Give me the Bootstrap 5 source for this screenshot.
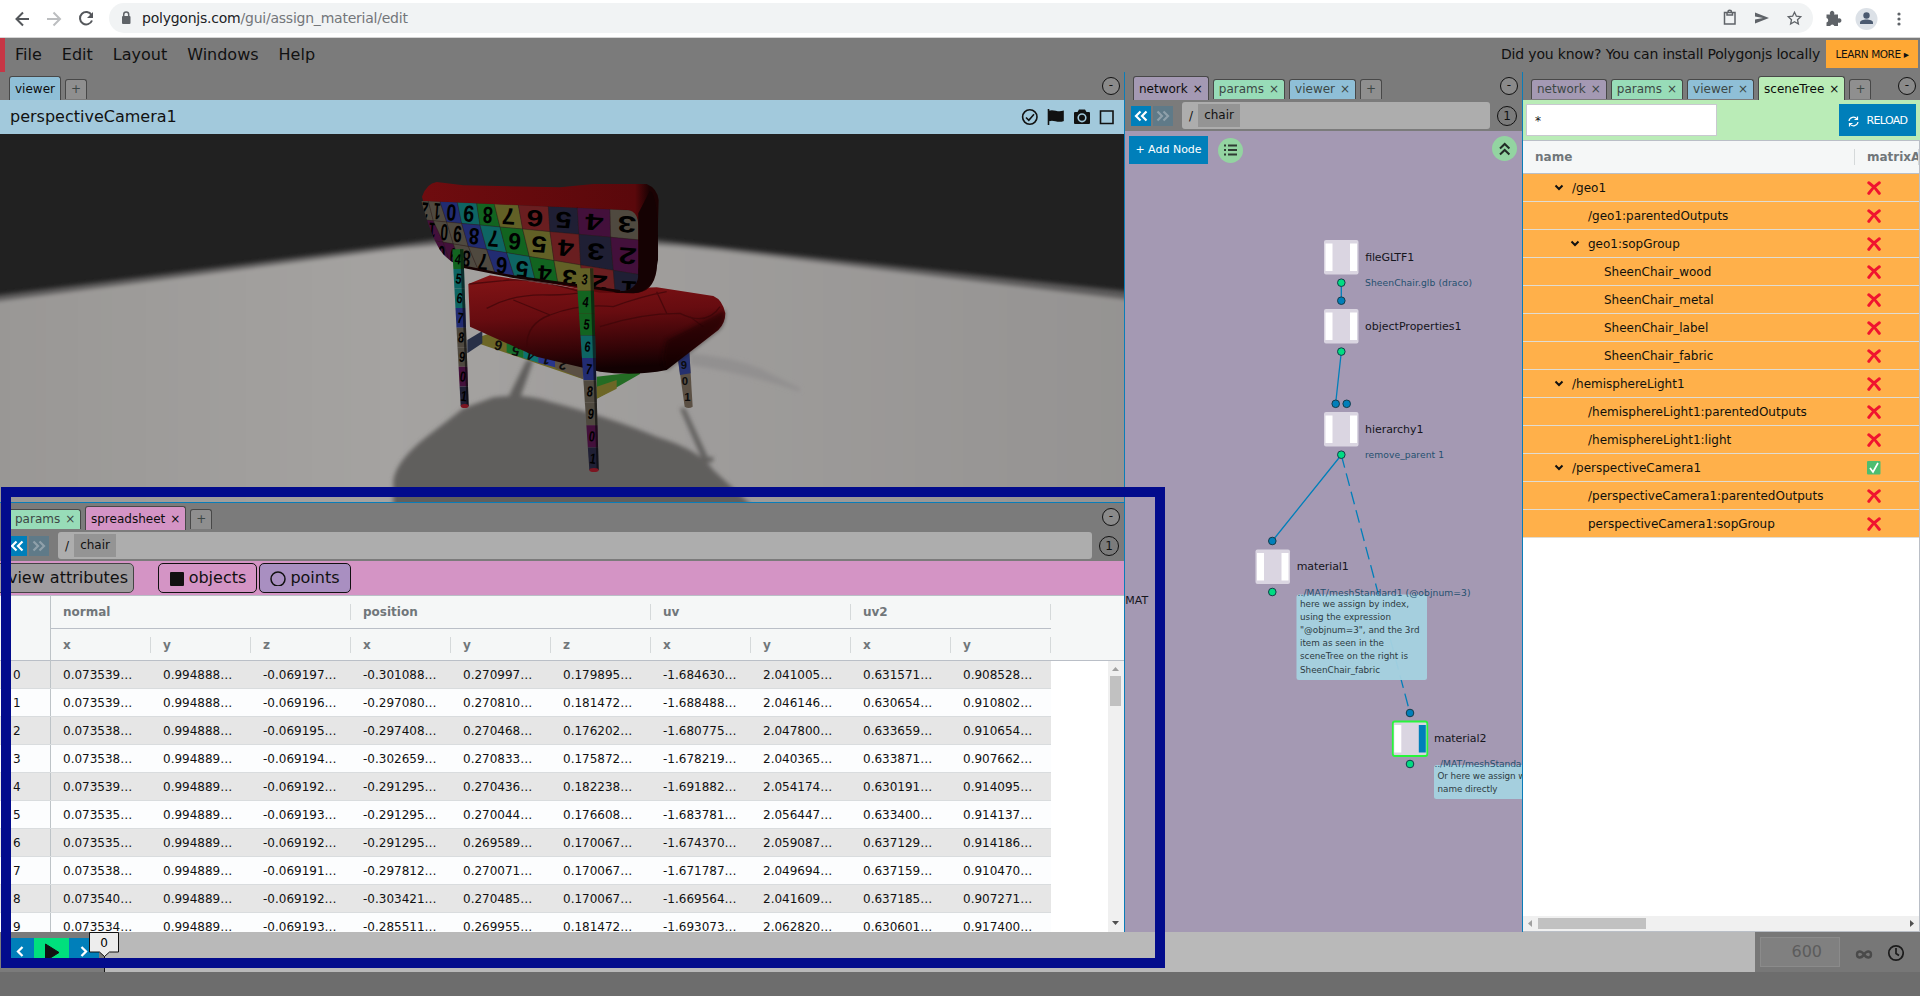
<!DOCTYPE html>
<html lang="en">
<head>
<meta charset="utf-8">
<title>Polygonjs - assign_material</title>
<meta name="viewport" content="width=device-width, initial-scale=1">
<link href="https://cdn.jsdelivr.net/npm/bootstrap@5.3.0/dist/css/bootstrap.min.css" rel="stylesheet">
<style>
body{width:1920px;height:996px;overflow:hidden;background:#7b7b7b;font:12px/16px "DejaVu Sans",sans-serif;color:#111}
svg{display:block;flex:none}
.chrome-bar{height:38px;background:#fff;border-bottom:1px solid #d5d5d5;padding-left:14px}
.omni{height:30px;width:1704px;margin-left:13px;background:#f1f3f4;border-radius:15px;padding:0 10px 0 10px;font-size:14px;color:#202124;margin-top:-1px}
.omni .path{color:#73767a}
.url-text{letter-spacing:-.23px}
.menu-row{height:34px;border-left:5px solid #c73645}
.menu-row .entries{font-size:16px;gap:20px;padding-left:10px}
.tip{font-size:14px;letter-spacing:-.17px;padding-bottom:3px}
.learn{width:92px;height:28px;background:#ffa834;font-size:10.5px;letter-spacing:-.42px;margin:0 2px 2px 6px;padding-bottom:1px}
.panel-a{width:1125px;border-right:1px solid #0a7db8}
.panel-b{width:398px;border-right:1px solid #0a7db8}
.panel-c{width:397px}
.tabrow{height:28px;padding-left:9px;gap:4px}
.tb{height:20px;margin-bottom:1px;border:1px solid #484848;border-bottom:0;border-radius:3px 3px 0 0;padding:0 5px;color:#3c4745;line-height:18px;white-space:nowrap}
.tb.on{height:24px;margin-bottom:0;line-height:24px;color:#0c0c0c}
.tb i{font-style:normal;margin-left:5px}
.purple{background:#a499b3}.green{background:#98dcb8}.blue{background:#8fbfd7}.pink{background:#d494c5}.lime{background:#baecb7}.plain{background:#8f8f8f;width:22px;text-align:center}
.circ{width:18px;height:18px;border:1px solid #111;border-radius:50%;line-height:14px;text-align:center;background:#8a8a8a;font-size:12px}
.circ.one{width:20px;height:20px;line-height:18px;background:transparent;font-size:12px}
.nav-sq{width:20px;height:20px;background:#007fba}
.nav-sq.off{background:#5f7a88;margin-left:2px}
.pathbox{height:27px;background:#adadad;border-radius:3px;padding-left:7px}
.pathbox b{font-weight:400;background:#949494;height:23px;line-height:22px;width:42px;text-align:center;margin-left:5px}
.cam-head{height:34px;background:#a2c9dc;font-size:16px;padding:0 10px}
.blueline{height:1px;background:#0a7db8}
.sheet-bar{height:34px;background:#d494c5;font-size:16px}
.sheet-bar .bx{height:30px;border:1px solid #111;border-radius:5px}
.sheet{background:#fff;height:337px;overflow:hidden;border-top:1px solid #babfc7}
.hd{background:#f5f7f7;color:#70767a;font-weight:700}
.hd .cl{position:relative;height:32px;line-height:33px;padding-left:13px}
.hd .cl::after{content:"";position:absolute;right:0;top:8px;height:16px;width:1px;background:#d5d9da}
.hd .cl.first{padding:0;border-right:1px solid #bdc3c7}.hd .cl.first::after{display:none}
.first{width:51px;flex:none}
.dr{height:28px;border-bottom:1px solid #d9dcde;background:#fcfdfe;width:1051px;line-height:28px}
.dr.odd{background:#e6e6e6}
.dr div{width:100px;padding-left:12px}
.dr div.first{width:51px;padding-left:13px;border-right:1px solid #bdc3c7}
.vscroll{width:16px;background:#f0f0f0}
.addnode{width:79px;height:28px;background:#007fba;color:#fff;font-size:11px;padding-bottom:1px}
.rd{width:25px;height:25px;border-radius:50%;background:#93d4a1}
.tree{height:792px;background:#fff;border-top:1px solid #babfc7;border-right:1px solid #babfc7;border-bottom:1px solid #babfc7;overflow:hidden}
.trow{height:28px;background:#ffb04a;border-bottom:1px solid #e0dcd2;line-height:28px;color:#10100c}
.trow svg{position:relative;top:.5px}
.timeline{height:40px;background:#b9b9b9;position:relative}
.annot{position:absolute;left:1px;top:487px;width:1164px;height:481px;border:10px solid #020b8c;z-index:20}
.tick{position:absolute;left:89px;top:0;z-index:10}
.pbtn{width:30px;height:30px;background:#007fba}
</style>
</head>
<body>
<header class="chrome-bar d-flex align-items-center">
  <svg width="82" height="36" viewBox="0 0 82 36" fill="none" stroke="#54575b" stroke-width="2"><path d="M15 18H3M9 11.500L2.500 18L9 24.500"/><path d="M33 18h12M39.500 11.500L46 18l-6.500 6.500" stroke="#bcbec0"/><path d="M77.500 14A6.200 6.200 0 1 0 78 19.500"/><path d="M79 11v6h-6z" fill="#54575b" stroke="none"/></svg>
  <div class="omni d-flex align-items-center">
    <svg class="me-2" width="15" height="16" viewBox="0 0 15 16"><rect x="3" y="6" width="8.500" height="8" rx="1" fill="#5f6368"/><path d="M4.700 6V4.500a2.500 2.500 0 0 1 5 0V6" fill="none" stroke="#5f6368" stroke-width="1.500"/></svg>
    <span class="url-text">polygonjs.com<span class="path">/gui/assign_material/edit</span></span>
    <svg class="ms-auto" width="80" height="20" viewBox="0 0 80 20" fill="none" stroke="#5f6368" stroke-width="1.500"><path d="M1.500 4.500h10.500v11.500H1.500zM4 4.500V7h5.500V4.500M5 4a1.700 1.700 0 0 1 3.500 0"/><path d="M32 4.500l14 5.500-14 5.500V11.500l8-1.500-8-1.500z" fill="#5f6368" stroke="none"/><path d="M71.500 4.200l1.900 4 4.300.500-3.200 3 .900 4.300-3.900-2.200-3.900 2.200.900-4.300-3.200-3 4.300-.500z" stroke-width="1.300"/></svg>
  </div>
  <svg width="88" height="36" viewBox="1 0 88 36" fill="#5f6368"><path d="M5.500 13.500h3.700a2.300 2.300 0 1 1 3.800 0h4v4a2.300 2.300 0 1 1 0 4v3.500h-3.600a2.200 2.200 0 0 0-4.200 0H5.500v-3.600a2.200 2.200 0 0 0 0-4.300z" transform="translate(9 0)"/><circle cx="54.500" cy="18" r="11" fill="#dce1e7"/><g fill="#4b5a70"><circle cx="54.500" cy="14.500" r="3.200"/><path d="M48 23v-1.500c0-4 13-4 13 0V23z"/></g><circle cx="87" cy="13" r="1.600"/><circle cx="87" cy="18" r="1.600"/><circle cx="87" cy="23" r="1.600"/></svg>
</header>
<nav class="menu-row d-flex align-items-center">
  <div class="entries d-flex"><span>File</span><span>Edit</span><span>Layout</span><span>Windows</span><span>Help</span></div>
  <span class="tip ms-auto">Did you know? You can install Polygonjs locally</span>
  <div class="learn d-flex align-items-center justify-content-center">LEARN MORE ▸</div>
</nav>
<main class="d-flex" style="height:860px">
  <section class="panel-a d-flex flex-column overflow-hidden">
    <div class="tabrow d-flex align-items-end"><div class="tb on blue">viewer</div><div class="tb plain">+</div><div class="circ ms-auto align-self-center" style="margin-right:4px">-</div></div>
    <div class="cam-head d-flex align-items-center"><span>perspectiveCamera1</span>
      <svg class="ms-auto" width="94" height="20" viewBox="0 0 94 20" fill="none" stroke="#111" stroke-width="1.600"><circle cx="9.800" cy="10" r="7.200"/><path d="M6 10.500l2.800 2.800 5.200-6"/><path d="M28.500 2v16M29 4.500c5-2 8 2 14 0v9c-6 2-9-2-14 0z" fill="#111"/><path d="M54 5h3.500l1.500-2.500h6L66.500 5H69q1 0 1 1v10q0 1-1 1H55q-1 0-1-1V6q0-1 1-1z" fill="#111" stroke="none"/><circle cx="62" cy="10.800" r="3.800" stroke="#a2c9dc"/><path d="M80.500 4h12.500v12.500H80.500z"/></svg>
    </div>
    <svg id="view" width="1124" height="368" viewBox="0 134 1124 368">
      <defs>
        <linearGradient id="fl" x1="0" y1="0" x2="1" y2="0"><stop offset="0" stop-color="#999795"/><stop offset=".35" stop-color="#a5a3a1"/><stop offset="1" stop-color="#959392"/></linearGradient>
        <linearGradient id="seat" x1="0" y1="0" x2=".15" y2="1"><stop offset="0" stop-color="#841416"/><stop offset=".45" stop-color="#670c10"/><stop offset=".8" stop-color="#340407"/><stop offset="1" stop-color="#120102"/></linearGradient>
        <linearGradient id="backr" x1="0" y1="0" x2="1" y2="0"><stop offset="0" stop-color="#6f0c0f"/><stop offset=".9" stop-color="#5a080b"/><stop offset=".96" stop-color="#1b0203"/></linearGradient>
        <filter id="b1"><feGaussianBlur stdDeviation="2"/></filter><filter id="b2"><feGaussianBlur stdDeviation="6"/></filter>
        <clipPath id="bc"><path d="M124 122L745 150Q775 155 775 200V350Q768 392 720 394Q400 350 240 318Q200 300 180 270Q150 220 124 122z"/></clipPath>
      </defs>
      <rect y="134" width="1124" height="368" fill="#212121"/>
      <path d="M-10 296L470 235Q560 228 640 238L1134 292V520H-10z" fill="#5b5a5a" filter="url(#b1)"/>
      <path d="M-10 302L400 248Q560 232 720 250L1134 300V520H-10z" fill="url(#fl)" filter="url(#b1)"/>
      <g transform="translate(380 160) scale(.33333)">
        <g filter="url(#b2)" fill="#615f5d"><path d="M930 580Q1050 590 1140 625L1260 685V695Q1100 640 930 615z" fill="#929090"/><path d="M40 960Q50 900 140 830Q200 785 250 745L340 712Q440 700 510 725Q700 775 830 830Q960 870 1000 930L1130 1050H40z"/><path d="M285 740L420 715L460 600L440 600L385 712zM915 745L990 905L970 905L900 745zM650 930L1000 890V905L650 942z"/></g>
        <path d="M300 530L330 520L610 605V658L300 552z" fill="#6d6626"/><path d="M380 545l50 13v36l-50-17z" fill="#176d2c"/><path d="M430 558l45 12v38l-45-14z" fill="#0d7271"/><path d="M475 570l50 14v38l-50-14z" fill="#29358b"/><path d="M525 584l85 21v52l-85-33z" fill="#5b5044"/>
        <g font-family="Liberation Sans" font-weight="700" font-size="42" fill="#0c0c0c"><text transform="translate(370 545) rotate(195)">6</text><text transform="translate(422 562) rotate(195)">5</text><text transform="translate(468 575) rotate(195)">4</text><text transform="translate(514 588) rotate(195)">1</text><text transform="translate(564 604) rotate(195)">2</text></g>
        <path d="M262 540l45-27v37l-45 30z" fill="#283047"/><path d="M650 650L780 635V642L650 716z" fill="#246c24"/><path d="M650 680l60-20v26l-60 30z" fill="#6d6626"/>
        <path d="M893 590l35-15 10 165q-12 8-24 0z" fill="#5b5044"/><path d="M893 590l35-15 4 65-32 5z" fill="#26316f"/>
        <g font-family="Liberation Sans" font-weight="700" font-size="34" fill="#0c0c0c"><text x="902" y="628">9</text><text x="905" y="676">0</text><text x="913" y="722">1</text></g>
        <path d="M265 372L330 346L620 390L830 382L1000 408Q1028 420 1036 460Q1036 490 1015 510L860 630Q760 650 660 635L470 590L270 500z" fill="url(#seat)"/>
        <path d="M268 372L370 362Q450 350 600 395M320 445Q400 400 510 405Q570 405 620 395M440 560Q440 490 510 465Q600 430 700 440Q780 410 860 395M510 465L400 420M660 500Q780 460 900 460Q980 500 1020 440M860 460L830 395M930 470L970 500" fill="none" stroke="#3c0508" stroke-width="4" opacity=".7"/>
        <path d="M1034 470Q1030 500 1015 510L860 630Q840 600 860 540Q940 500 1034 450z" fill="#120102" opacity=".55" filter="url(#b2)"/>
        <path d="M126 110Q140 70 170 66L250 76L540 82L640 72L800 72Q832 85 836 120L830 330Q820 400 760 400L660 398L240 320Q180 290 150 200z" fill="url(#backr)"/>
        <path d="M810 92Q836 100 834 300Q820 400 760 400L700 398Q772 390 775 320V160z" fill="#150203"/>
        <g clip-path="url(#bc)" id="cells"></g>
        <path d="M240 318L400 350L720 394" stroke="#160202" stroke-width="8" fill="none"/>
        <g id="legs"></g>
      </g>
    </svg>
    <div class="blueline"></div>
    <div class="tabrow d-flex align-items-end" style="padding-left:4px;height:27px"><div class="tb green" style="width:77px;padding-left:10px">params<i>×</i></div><div class="tb on pink">spreadsheet<i>×</i></div><div class="tb plain">+</div><div class="circ ms-auto align-self-center" style="margin-right:4px">-</div></div>
    <div class="d-flex align-items-center" style="height:31px;padding-left:7px;padding-right:5px"><div class="nav-sq"><svg width="20" height="20" fill="none" stroke="#fff" stroke-width="2.200"><path d="M9.500 5.500L5 10l4.500 4.500M15.500 5.500L11 10l4.500 4.500"/></svg></div><div class="nav-sq off"><svg width="20" height="20" fill="none" stroke="#8fa0aa" stroke-width="2.200"><path d="M4.500 5.500L9 10l-4.500 4.500M10.500 5.500L15 10l-4.500 4.500"/></svg></div><div class="pathbox d-flex align-items-center" style="width:1034px;margin-left:9px"><span>/</span><b>chair</b></div><div class="circ one ms-auto">1</div></div>
    <div class="sheet-bar d-flex align-items-center"><div class="bx d-flex align-items-center justify-content-end" style="width:139px;margin-left:-5px;padding-right:5px;background:#9f9c9f;border-color:#444">view attributes</div>
      <div class="bx d-flex align-items-center justify-content-center" style="width:99px;margin-left:24px"><svg class="me-1" width="16" height="16"><rect x="1" y="2" width="14" height="14" rx="1" fill="#111"/></svg><span>objects</span></div>
      <div class="bx d-flex align-items-center justify-content-center" style="width:92px;margin-left:2px;background:#a98fc1"><svg class="me-1" width="16" height="16"><circle cx="8" cy="9" r="7" fill="none" stroke="#111" stroke-width="1.500"/></svg><span>points</span></div>
    </div>
    <div class="sheet">
      <div class="hd d-flex" style="height:33px"><div class="cl first" style="height:33px"></div><div class="d-flex" style="border-bottom:1px solid #babfc7"><div class="cl" style="width:300px;padding-left:12px">normal</div><div class="cl" style="width:300px;padding-left:12px">position</div><div class="cl" style="width:200px;padding-left:12px">uv</div><div class="cl" style="width:200px;padding-left:12px">uv2</div></div></div>
      <div class="hd d-flex" id="axes" style="border-bottom:1px solid #babfc7;height:32px"><div class="cl first" style="height:32px"></div></div>
      <div class="d-flex justify-content-between"><div id="rows" style="width:1051px"></div><div class="vscroll"><svg width="16" height="271"><path d="M4 10h7l-3.500-4z" fill="#a0a0a0"/><rect x="2" y="15" width="11" height="30" fill="#c1c1c1"/><path d="M4 260h7l-3.500 4z" fill="#505050"/></svg></div></div>
    </div>
  </section>
  <section class="panel-b d-flex flex-column overflow-hidden">
    <div class="tabrow d-flex align-items-end" style="padding-left:8px"><div class="tb on purple">network<i>×</i></div><div class="tb green">params<i>×</i></div><div class="tb blue">viewer<i>×</i></div><div class="tb plain">+</div><div class="circ ms-auto align-self-center" style="margin-right:4px">-</div></div>
    <div class="d-flex align-items-center" style="height:31px;padding-left:6px;padding-right:5px"><div class="nav-sq"><svg width="20" height="20" fill="none" stroke="#fff" stroke-width="2.200"><path d="M9.500 5.500L5 10l4.500 4.500M15.500 5.500L11 10l4.500 4.500"/></svg></div><div class="nav-sq off"><svg width="20" height="20" fill="none" stroke="#8fa0aa" stroke-width="2.200"><path d="M4.500 5.500L9 10l-4.500 4.500M10.500 5.500L15 10l-4.500 4.500"/></svg></div><div class="pathbox d-flex align-items-center" style="width:308px;margin-left:9px"><span>/</span><b>chair</b></div><div class="circ one ms-auto">1</div></div>
    <div class="purple position-relative" style="height:801px">
      <svg id="graph" class="position-absolute top-0 start-0" width="397" height="800" viewBox="1125 131 397 800" style="font-family:'DejaVu Sans',sans-serif"></svg>
      <div class="position-relative d-flex align-items-start" style="padding:5px 5px 0 4px"><div class="addnode d-flex align-items-center justify-content-center">+ Add Node</div>
      <div class="rd" style="margin:2px 0 0 10px"><svg width="25" height="25" fill="none" stroke="#2f3a33" stroke-width="1.800"><path d="M6 7.500h2M6 12h2M6 16.500h2M10 7.500h9M10 12h9M10 16.500h9"/></svg></div>
      <div class="rd ms-auto"><svg width="25" height="25" fill="none" stroke="#222c26" stroke-width="2"><path d="M8 12.500L12.700 8l4.700 4.500M8 18.500l4.700-4.500 4.700 4.500"/></svg></div></div>
    </div>
  </section>
  <section class="panel-c d-flex flex-column overflow-hidden">
    <div class="tabrow d-flex align-items-end" style="padding-left:8px"><div class="tb purple">network<i>×</i></div><div class="tb green">params<i>×</i></div><div class="tb blue">viewer<i>×</i></div><div class="tb on lime">sceneTree<i>×</i></div><div class="tb plain">+</div><div class="circ ms-auto align-self-center" style="margin-right:4px">-</div></div>
    <div class="lime d-flex justify-content-between" style="height:40px;padding:4px 4px 4px 3px"><div class="bg-white" style="width:191px;height:32px;border:1px solid #c9c9d0;padding:8px 8px">*</div><div class="d-flex align-items-center justify-content-center text-white" style="width:77px;background:#007fba;height:32px;font-size:11px;letter-spacing:-.65px;padding-top:2px"><svg class="me-2" width="11" height="11" viewBox="0 0 11 11" fill="none" stroke="#fff" stroke-width="1.200"><path d="M1 5A4.500 4.500 0 0 1 9 3M10 6A4.500 4.500 0 0 1 2 8M9.500.500V3.500H6.500M1.500 10.500V7.500h3"/></svg>RELOAD</div></div>
    <div class="tree d-flex flex-column"><div class="hd d-flex" style="height:33px;flex:none;border-bottom:1px solid #babfc7"><div class="cl" style="width:332px;padding-left:12px">name</div><div class="cl text-nowrap overflow-hidden" style="width:64px;padding-left:12px">matrixA</div></div><div id="tree"></div>
      <svg class="mt-auto" width="396" height="15"><rect width="396" height="15" fill="#f0f0f0"/><path d="M9 4v7l-4-3.500z" fill="#a0a0a0"/><rect x="15" y="2" width="108" height="11" fill="#c1c1c1"/><path d="M387 4v7l4-3.500z" fill="#505050"/></svg></div>
  </section>
</main>
<footer>
  <div class="timeline d-flex">
    <div class="d-flex" style="width:104px;background:#7b7b7b;padding:6px 0 0 4px"><div class="pbtn"><svg width="30" height="30" fill="none" stroke="#fff" stroke-width="2.300"><path d="M18.500 9L14 13.500l4.500 4.500"/></svg></div><div class="pbtn" style="width:35px;background:#00e07d"><svg width="35" height="30"><path d="M11.500 6v17L25 14.500z" fill="#111" stroke="#111" stroke-linejoin="round"/></svg></div><div class="pbtn"><svg width="30" height="30" fill="none" stroke="#fff" stroke-width="2.300"><path d="M12.500 9L17 13.500 12.500 18"/></svg></div></div>
    <svg class="tick" width="31" height="40"><path d="M15.500 24v17" stroke="#111"/><path d="M.500 .500h29v19.500h-9l-5 4.500-5-4.500h-10z" fill="#ededed" stroke="#111"/><text x="15" y="14.500" font-size="12" text-anchor="middle" font-family="DejaVu Sans">0</text></svg>
    <div class="ms-auto d-flex align-items-center" style="width:165px;background:#777;padding-left:5px;color:#5c5c5c"><div class="text-end" style="width:80px;height:30px;border:1px solid #8b8b8b;background:#808080;padding:6px 17px;font-size:16px">600</div><svg width="64" height="36" fill="none" stroke="#4a4a4a" stroke-width="2.400"><path d="M24 20.500c-3-4.500-7-3.500-7 0s4 4.500 7 0 7-3.500 7 0-4 4.500-7 0z"/><g stroke="#1b1b1b" stroke-width="1.700"><circle cx="56" cy="19" r="7.200"/><path d="M56 14V19.500l3 2"/></g></svg></div>
  </div>
  <div style="height:24px;background:#6d6d6d"></div>
</footer>
<div class="annot"></div>
<script>
const E = id => document.getElementById(id);
E('axes').insertAdjacentHTML('beforeend', ['x','y','z','x','y','z','x','y','x','y'].map(t => `<div class="cl" style="width:100px;padding-left:12px">${t}</div>`).join(''));
const data = `0.073539 0.994888 -0.069197 -0.301088 0.270997 0.179895 -1.684630 2.041005 0.631571 0.908528
0.073539 0.994888 -0.069196 -0.297080 0.270810 0.181472 -1.688488 2.046146 0.630654 0.910802
0.073538 0.994888 -0.069195 -0.297408 0.270468 0.176202 -1.680775 2.047800 0.633659 0.910654
0.073538 0.994889 -0.069194 -0.302659 0.270833 0.175872 -1.678219 2.040365 0.633871 0.907662
0.073539 0.994889 -0.069192 -0.291295 0.270436 0.182238 -1.691882 2.054174 0.630191 0.914095
0.073535 0.994889 -0.069193 -0.291295 0.270044 0.176608 -1.683781 2.056447 0.633400 0.914137
0.073535 0.994889 -0.069192 -0.291295 0.269589 0.170067 -1.674370 2.059087 0.637129 0.914186
0.073538 0.994889 -0.069191 -0.297812 0.270071 0.170067 -1.671787 2.049694 0.637159 0.910470
0.073540 0.994889 -0.069192 -0.303421 0.270485 0.170067 -1.669564 2.041609 0.637185 0.907271
0.073534 0.994889 -0.069193 -0.285511 0.269955 0.181472 -1.693073 2.062820 0.630601 0.917400`.split('\n');
E('rows').innerHTML = data.map((r, i) => `<div class="dr d-flex ${i % 2 ? '' : 'odd'}"><div class="first">${i}</div>${r.split(' ').map(v => `<div>${v}…</div>`).join('')}</div>`).join('');
const tree = [[0,'/geo1',1],[1,'/geo1:parentedOutputs'],[1,'geo1:sopGroup',1],[2,'SheenChair_wood'],[2,'SheenChair_metal'],[2,'SheenChair_label'],[2,'SheenChair_fabric'],[0,'/hemisphereLight1',1],[1,'/hemisphereLight1:parentedOutputs'],[1,'/hemisphereLight1:light'],[0,'/perspectiveCamera1',1],[1,'/perspectiveCamera1:parentedOutputs'],[1,'perspectiveCamera1:sopGroup']];
const cross = '<svg width="14" height="14" fill="none" stroke="#f0142f" stroke-width="3" stroke-linecap="round"><path d="M1.800 1.800Q8 6 12.300 12.300M12.300 1.800Q6 6 1.800 12.300"/></svg>';
const check = '<svg width="14" height="14"><rect width="13.500" height="13.500" rx="1" fill="#4dbd70"/><path d="M3 7l3 4 5-9" fill="none" stroke="#fff" stroke-width="1.700"/></svg>';
E('tree').innerHTML = tree.map(([d, t, o], i) => `<div class="trow d-flex align-items-center"><div class="d-flex align-items-center" style="width:344px;padding-left:${31 + 16 * d}px"><svg width="18" height="10" fill="none" stroke="#111" stroke-width="2">${o ? '<path d="M1.500 2.500L5 6l3.500-3.500"/>' : ''}</svg>${t}</div>${i === 10 ? check : cross}</div>`).join('');

// node graph
const W = '#007fba', G = '#00dc82';
const dot = (x, y, c) => `<circle cx="${x}" cy="${y}" r="3.800" fill="${c}" stroke="#143c4a"/>`;
const box = (x, y, sel) => `<rect x="${x}" y="${y}" width="34.500" height="34.500" rx="2" fill="#dad5e1" ${sel ? 'stroke="#28f53c" stroke-width="1.800"' : ''}/><rect x="${x + 1.5}" y="${y + 3.5}" width="7" height="27.500" fill="#fff"/><rect x="${x + 26}" y="${y + 3.5}" width="7" height="27.500" fill="${sel ? W : '#fff'}"/>`;
const tx = (x, y, s, w, t, c) => `<text x="${x}" y="${y}" font-size="${s}" textLength="${w}" fill="${c}">${t}</text>`;
const D = '#15151c', S = '#25506f', N = '#2d3b42';
E('graph').innerHTML = `<g stroke="${W}" stroke-width="1.300"><path d="M1341.300 283V300M1341.300 352L1335.700 403M1341.300 455L1272.300 541"/><path d="M1341.300 455L1410 713" stroke-dasharray="13 6"/></g>` +
 box(1324,240) + box(1324,309) + box(1324,412) + box(1255.5,549.5) + box(1392.8,721.5,1) +
 dot(1341.3,282.7,G) + dot(1341.3,300.7,W) + dot(1341.3,351.6,G) + dot(1335.7,403.8,W) + dot(1346.7,403.8,W) + dot(1341.3,454.7,G) + dot(1272.3,541,W) + dot(1272.3,592,G) + dot(1410,713,W) + dot(1410,764,G) +
 tx(1365,261,11,49,'fileGLTF1',D) + tx(1365,330,11,96.5,'objectProperties1',D) + tx(1365,433,11,58.5,'hierarchy1',D) + tx(1296.7,570,11,52,'material1',D) + tx(1434,742,11,52.5,'material2',D) +
 tx(1365,286,9.2,107,'SheenChair.glb (draco)',S) + tx(1365,458,9.2,79,'remove_parent 1',S) +
 `<rect x="1296.500" y="594.500" width="130.500" height="85.500" rx="2.500" fill="#a5d2e0" opacity=".95"/><rect x="1434" y="765" width="130" height="34" rx="2.500" fill="#a5d2e0" opacity=".95"/>` +
 tx(1297.5,596,9.2,173,'../MAT/meshStandard1 (@objnum=3)',S) + tx(1434.5,767,9.2,87,'../MAT/meshStanda',S) +
 tx(1300,607,8.8,109,'here we assign by index,',N) + tx(1300,620,8.8,91,'using the expression',N) + tx(1300,633,8.8,119.5,'"@objnum=3", and the 3rd',N) + tx(1300,646,8.8,84,'item as seen in the',N) + tx(1300,659,8.8,108,'sceneTree on the right is',N) + tx(1300,673,8.8,80,'SheenChair_fabric',N) +
 tx(1437.5,779,8.8,88,'Or here we assign w',N) + tx(1437.5,792,8.8,60,'name directly',N) + tx(1125.3,604,11,23,'MAT',D);

// UV-grid label on the chair back
const cols = {v:'#43103b',w:'#4f493f',b:'#222c72',c:'#0e6563',g:'#126420',y:'#626026',r:'#691e20',n:'#1f1f34'};
const xs = [[110,145,180,232,290,343,415,505,592,690,790],[125,160,200,245,300,360,428,510,597,692,790],[150,190,220,265,320,380,448,522,602,700,790],[180,215,250,300,350,408,470,538,612,708,790]];
const ys = [0,1,2,3].map(r => x => [122,179,236,305][r] + (x - 124) * [.045,.093,.165,.21][r]);
const kinds = ['wwbcgyrnvw','vwwbcgyrnv','vvwwbcgyrn'];
const digits = ['2109876543','1098765432','0987654321'];
let h = '';
for (let r = 0; r < 3; r++) for (let c = 0; c < 10; c++) {
  const a = xs[r][c], b = xs[r][c+1], p = xs[r+1][c], q = xs[r+1][c+1];
  h += `<path d="M${a} ${ys[r](a)}L${b} ${ys[r](b)}L${q} ${ys[r+1](q)}L${p} ${ys[r+1](p)}z" fill="${cols[kinds[r][c]]}" stroke="#222"/>`;
  const cx = (a+b+p+q)/4, cy = (ys[r](a)+ys[r](b)+ys[r+1](p)+ys[r+1](q))/4;
  h += `<text transform="translate(${cx} ${cy}) rotate(184)" y="24" font-size="70" font-weight="700" text-anchor="middle" font-family="Liberation Sans" textLength="${(b-a)*.56}" lengthAdjust="spacingAndGlyphs">${digits[r][c]}</text>`;
}
E('cells').innerHTML = h;
const leg = (x1, x2, y1, b1, b2, y2, ks, ds) => { let o = ''; const n = ks.length;
  for (let i = 0; i < n; i++) { const t = i/n, u = (i+1)/n, L = k => x1+(b1-x1)*k, R = k => x2+(b2-x2)*k, Y = k => y1+(y2-y1)*k;
    o += `<path d="M${L(t)} ${Y(t)}H${R(t)}L${R(u)} ${Y(u)}H${L(u)}z" fill="${cols[ks[i]]}"/><text transform="translate(${(L(t)+R(t))/2} ${(Y(t)+Y(u))/2}) rotate(8)" font-size="44" font-weight="700" text-anchor="middle" y="15" font-family="Liberation Sans" textLength="18" lengthAdjust="spacingAndGlyphs">${ds[i]}</text>`; }
  return o + `<path d="M${x2-10} ${y1}H${x2}L${b2} ${y2}H${b2-6}z" fill="#080808" opacity=".6"/><ellipse cx="${(b1+b2)/2}" cy="${y2}" rx="${(b2-b1)/2}" ry="6" fill="#7c1521"/>`; };
E('legs').innerHTML = leg(217,250,268,242,266,738,'gccbwwvn','45678901') + leg(588,640,325,628,656,930,'yggcbwwvn','345678901');
</script>
<script src="https://cdn.jsdelivr.net/npm/bootstrap@5.3.0/dist/js/bootstrap.bundle.min.js"></script>
</body>
</html>
